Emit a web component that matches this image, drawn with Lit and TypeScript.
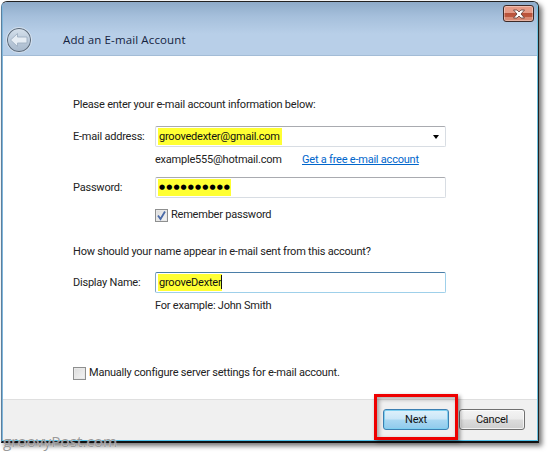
import { LitElement, html, css } from "lit";
import { customElement } from "lit/decorators.js";

@customElement("app-root")
export class AppRoot extends LitElement {
  static styles = css`
    :host { display: block; width: 549px; height: 453px; position: relative; overflow: hidden; background: #fff;
      font-family: Roboto, "Liberation Sans", sans-serif; font-size: 11px; letter-spacing: -.22px; color: #222; }
    * { box-sizing: border-box; }
    .page { padding: 1px 0 0 1px; }
    .win { width: 538px; height: 442px; border: 1px solid #222; border-left-color: #5c7f9c; border-radius: 6px 6px 0 0;
      box-shadow: 3px 3px 5px rgba(0,0,0,.55); display: flex; flex-direction: column; overflow: hidden;
      border-bottom-width: 2px; border-bottom-color: #111; background: #b8cfe8; }
    .inner { flex: 1; display: flex; flex-direction: column; border-left: 1px solid #7fb6dc; border-right: 1px solid #6fc3e0; border-bottom: 1px solid #4fc0e8; min-height: 0; }
    .head { height: 54px; flex: none; display: flex; align-items: flex-start; padding: 25px 0 0 3px; position: relative;
      background: linear-gradient(#8eabc9 0, #a5bfdb 14px, #b8cfe8 32px, #b8cfe8 100%); border-bottom: 1px solid #a3bcd6; }
    .back { width: 26px; height: 26px; flex: none; }
    .title { margin-left: 31px; margin-top: 5px; font-family: "Open Sans", sans-serif; font-size: 11.5px; letter-spacing: .12px; line-height: 16px; color: #14233f; }
    .close { position: absolute; right: 3px; top: 3px; width: 31px; height: 17px; border: 1px solid #3c2a28; border-radius: 3px;
      background: linear-gradient(#e69a86 0, #e39c88 50%, #b9523a 50%, #bd5a40 75%, #d88a74 75%, #d88a74 100%); display: flex; align-items: center; justify-content: center; box-shadow: inset 0 0 0 1px rgba(255,255,255,.35); }
    .body { flex: 1; background: #fff; padding: 41px 0 0 70px; display: flex; flex-direction: column; min-height: 0; }
    .line { line-height: 16px; height: 16px; white-space: nowrap; }
    .row { display: flex; align-items: center; height: 21px; }
    .label { width: 82px; flex: none; }
    .field { width: 291px; height: 21px; border: 1px solid #d8dde3; border-top-color: #a9abb0; border-radius: 2px; padding: 0 2px; display: flex; align-items: center; justify-content: space-between; background: #fff; }
    .field.focus { border-color: #9fd0ea; border-top-color: #4a7ea8; border-left-color: #7fa6c4; }
    mark { background: #ffff33; color: #111; padding: 1px 0 1px 1px; line-height: 15px; }
    mark.wide { padding-right: 2px; }
    .caret { display: inline-block; width: 1px; height: 14px; background: #111; vertical-align: -3px; }
    .dots { font-size: 7px; letter-spacing: 1.1px; padding: 3px 0 3px 1px; line-height: 11px; color: #000; font-family: "DejaVu Sans", sans-serif; background: #ffff33; }
    .arrow { width: 0; height: 0; border: 3.5px solid transparent; border-top: 4px solid #000; border-bottom: 0; margin-right: 4px; }
    .sub { margin-left: 82px; display: flex; align-items: center; }
    .ex { width: 147px; flex: none; }
    .link { color: #0066cc; text-decoration: underline; }
    .check { width: 13px; height: 13px; border: 1px solid #8e8f8f; background: linear-gradient(135deg,#dcdcdc,#f4f4f4); box-shadow: inset 0 0 0 1px #e8e8e8; flex: none; margin-right: 3px; display: flex; align-items: center; justify-content: center; }
    .foot { height: 41px; flex: none; background: #f0f0f0; border-top: 1px solid #dfdfdf; display: flex; justify-content: flex-end; align-items: flex-start; gap: 10px; padding: 9px 12px 0 0; }
    .btn { width: 66px; height: 21px; border: 1px solid #707070; border-radius: 3px; display: flex; align-items: center; justify-content: center; color: #111;
      background: linear-gradient(#f4f4f4 0, #ebebeb 48%, #dcdcdc 52%, #cfcfcf 100%); box-shadow: inset 0 0 0 1px rgba(255,255,255,.7); }
    .btn.primary { border-color: #3c7fb1; background: linear-gradient(#dff1fb 0, #c9e6f7 48%, #a9d8f2 52%, #8fcaec 100%); box-shadow: inset 0 0 0 1px #7fd0f0; }
    .red { position: absolute; left: 374px; top: 394px; width: 84px; height: 46px; border: 3px solid #ee0000; box-shadow: 2px 2px 4px rgba(0,0,0,.45), inset 2px 2px 4px rgba(0,0,0,.35); }
    .mark { position: absolute; left: 3px; top: 431px; font-size: 15.3px; letter-spacing: 0; line-height: 20px; color: #9a9a9a; font-family: "Open Sans", sans-serif; text-shadow: 0 0 1px rgba(255,255,255,.8); }
    .m1 { margin-top: 13px; } .m2 { margin-top: 5px; } .m3 { margin-top: 9px; } .m4 { margin-top: 9px; }
    .m5 { margin-top: 21px; } .m6 { margin-top: 12px; } .m7 { margin-top: 5px; } .m8 { margin-top: 51px; display: flex; align-items: center; }
  `;

  render() {
    return html`
      <div class="page"><div class="win"><div class="inner">
        <div class="head">
          <svg class="back" viewBox="0 0 26 26">
            <defs><linearGradient id="g" x1="0" y1="0" x2="0" y2="1"><stop offset="0" stop-color="#d6e1ec"/><stop offset=".5" stop-color="#bccbdb"/><stop offset="1" stop-color="#a7b8cb"/></linearGradient></defs>
            <circle cx="13" cy="13" r="11.6" fill="url(#g)" stroke="#5f6d7d" stroke-width="1.2"/>
            <circle cx="13" cy="13" r="12.6" fill="none" stroke="#dfe9f3" stroke-width=".8"/>
            <path d="M4.5 13 L11.5 6.5 V10 H21 V16 H11.5 V19.5 Z" fill="#e6edf4" stroke="#9fb0c2" stroke-width=".9" stroke-linejoin="round"/>
          </svg>
          <div class="title">Add an E-mail Account</div>
          <div class="close">
            <svg width="14" height="10" viewBox="0 0 14 10"><path d="M1.5 1 H5 L7 3 L9 1 H12.5 L9 5 L12.5 9 H9 L7 7 L5 9 H1.5 L5 5 Z" fill="#fff" stroke="#5a3a34" stroke-width=".8" stroke-linejoin="round"/></svg>
          </div>
        </div>
        <div class="body">
          <div class="line">Please enter your e-mail account information below:</div>
          <div class="row m1">
            <div class="label">E-mail address:</div>
            <div class="field"><mark class="wide">groovedexter@gmail.com </mark><span class="arrow"></span></div>
          </div>
          <div class="sub line m2"><span class="ex">example555@hotmail.com</span><span class="link">Get a free e-mail account</span></div>
          <div class="row m3">
            <div class="label">Password:</div>
            <div class="field"><span class="dots">●●●●●●●●●●</span></div>
          </div>
          <div class="sub line m4">
            <span class="check"><svg width="11" height="11" viewBox="0 0 11 11"><path d="M2 5.5 L4.5 9 L9 1.5" fill="none" stroke="#4a6aa8" stroke-width="1.8"/></svg></span>
            <span>Remember password</span>
          </div>
          <div class="line m5">How should your name appear in e-mail sent from this account?</div>
          <div class="row m6">
            <div class="label">Display Name:</div>
            <div class="field focus"><mark>grooveDexter<span class="caret"></span></mark></div>
          </div>
          <div class="sub line m7">For example: John Smith</div>
          <div class="line m8">
            <span class="check"></span><span>Manually configure server settings for e-mail account.</span>
          </div>
        </div>
        <div class="foot">
          <div class="btn primary">Next</div>
          <div class="btn">Cancel</div>
        </div>
      </div></div></div>
      <div class="red"></div>
      <div class="mark">groovyPost.com</div>
    `;
  }
}
